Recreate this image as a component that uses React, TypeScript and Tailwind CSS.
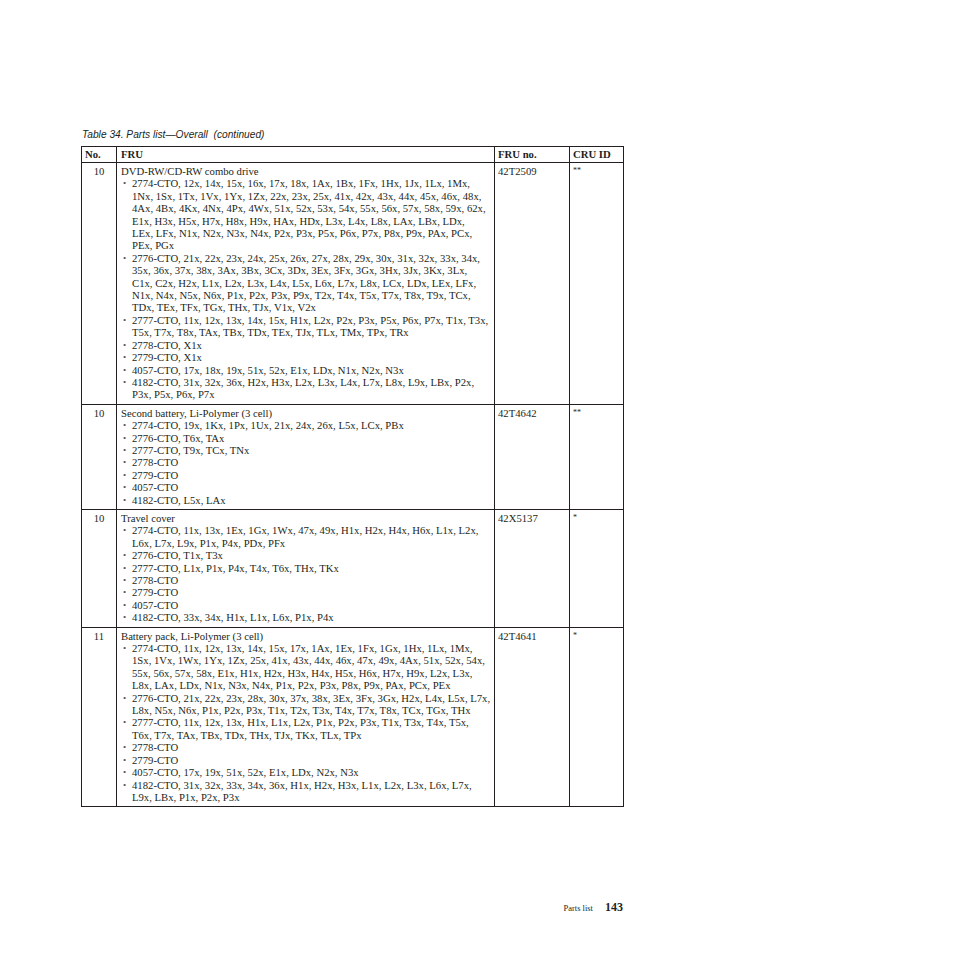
type Row = { no: string; title: string; fru: string; cru: string; items: string[][] }

const rows: Row[] = [
  {
    no: "10",
    title: "DVD-RW/CD-RW combo drive",
    fru: "42T2509",
    cru: "**",
    items: [
      [
        "2774-CTO, 12x, 14x, 15x, 16x, 17x, 18x, 1Ax, 1Bx, 1Fx, 1Hx, 1Jx, 1Lx, 1Mx,",
        "1Nx, 1Sx, 1Tx, 1Vx, 1Yx, 1Zx, 22x, 23x, 25x, 41x, 42x, 43x, 44x, 45x, 46x, 48x,",
        "4Ax, 4Bx, 4Kx, 4Nx, 4Px, 4Wx, 51x, 52x, 53x, 54x, 55x, 56x, 57x, 58x, 59x, 62x,",
        "E1x, H3x, H5x, H7x, H8x, H9x, HAx, HDx, L3x, L4x, L8x, LAx, LBx, LDx,",
        "LEx, LFx, N1x, N2x, N3x, N4x, P2x, P3x, P5x, P6x, P7x, P8x, P9x, PAx, PCx,",
        "PEx, PGx",
      ],
      [
        "2776-CTO, 21x, 22x, 23x, 24x, 25x, 26x, 27x, 28x, 29x, 30x, 31x, 32x, 33x, 34x,",
        "35x, 36x, 37x, 38x, 3Ax, 3Bx, 3Cx, 3Dx, 3Ex, 3Fx, 3Gx, 3Hx, 3Jx, 3Kx, 3Lx,",
        "C1x, C2x, H2x, L1x, L2x, L3x, L4x, L5x, L6x, L7x, L8x, LCx, LDx, LEx, LFx,",
        "N1x, N4x, N5x, N6x, P1x, P2x, P3x, P9x, T2x, T4x, T5x, T7x, T8x, T9x, TCx,",
        "TDx, TEx, TFx, TGx, THx, TJx, V1x, V2x",
      ],
      [
        "2777-CTO, 11x, 12x, 13x, 14x, 15x, H1x, L2x, P2x, P3x, P5x, P6x, P7x, T1x, T3x,",
        "T5x, T7x, T8x, TAx, TBx, TDx, TEx, TJx, TLx, TMx, TPx, TRx",
      ],
      ["2778-CTO, X1x"],
      ["2779-CTO, X1x"],
      ["4057-CTO, 17x, 18x, 19x, 51x, 52x, E1x, LDx, N1x, N2x, N3x"],
      ["4182-CTO, 31x, 32x, 36x, H2x, H3x, L2x, L3x, L4x, L7x, L8x, L9x, LBx, P2x,", "P3x, P5x, P6x, P7x"],
    ],
  },
  {
    no: "10",
    title: "Second battery, Li-Polymer (3 cell)",
    fru: "42T4642",
    cru: "**",
    items: [
      ["2774-CTO, 19x, 1Kx, 1Px, 1Ux, 21x, 24x, 26x, L5x, LCx, PBx"],
      ["2776-CTO, T6x, TAx"],
      ["2777-CTO, T9x, TCx, TNx"],
      ["2778-CTO"],
      ["2779-CTO"],
      ["4057-CTO"],
      ["4182-CTO, L5x, LAx"],
    ],
  },
  {
    no: "10",
    title: "Travel cover",
    fru: "42X5137",
    cru: "*",
    items: [
      ["2774-CTO, 11x, 13x, 1Ex, 1Gx, 1Wx, 47x, 49x, H1x, H2x, H4x, H6x, L1x, L2x,", "L6x, L7x, L9x, P1x, P4x, PDx, PFx"],
      ["2776-CTO, T1x, T3x"],
      ["2777-CTO, L1x, P1x, P4x, T4x, T6x, THx, TKx"],
      ["2778-CTO"],
      ["2779-CTO"],
      ["4057-CTO"],
      ["4182-CTO, 33x, 34x, H1x, L1x, L6x, P1x, P4x"],
    ],
  },
  {
    no: "11",
    title: "Battery pack, Li-Polymer (3 cell)",
    fru: "42T4641",
    cru: "*",
    items: [
      [
        "2774-CTO, 11x, 12x, 13x, 14x, 15x, 17x, 1Ax, 1Ex, 1Fx, 1Gx, 1Hx, 1Lx, 1Mx,",
        "1Sx, 1Vx, 1Wx, 1Yx, 1Zx, 25x, 41x, 43x, 44x, 46x, 47x, 49x, 4Ax, 51x, 52x, 54x,",
        "55x, 56x, 57x, 58x, E1x, H1x, H2x, H3x, H4x, H5x, H6x, H7x, H9x, L2x, L3x,",
        "L8x, LAx, LDx, N1x, N3x, N4x, P1x, P2x, P3x, P8x, P9x, PAx, PCx, PEx",
      ],
      [
        "2776-CTO, 21x, 22x, 23x, 28x, 30x, 37x, 38x, 3Ex, 3Fx, 3Gx, H2x, L4x, L5x, L7x,",
        "L8x, N5x, N6x, P1x, P2x, P3x, T1x, T2x, T3x, T4x, T7x, T8x, TCx, TGx, THx",
      ],
      [
        "2777-CTO, 11x, 12x, 13x, H1x, L1x, L2x, P1x, P2x, P3x, T1x, T3x, T4x, T5x,",
        "T6x, T7x, TAx, TBx, TDx, THx, TJx, TKx, TLx, TPx",
      ],
      ["2778-CTO"],
      ["2779-CTO"],
      ["4057-CTO, 17x, 19x, 51x, 52x, E1x, LDx, N2x, N3x"],
      ["4182-CTO, 31x, 32x, 33x, 34x, 36x, H1x, H2x, H3x, L1x, L2x, L3x, L6x, L7x,", "L9x, LBx, P1x, P2x, P3x"],
    ],
  },
]

const serif = "font-['Liberation_Serif',serif]"

export default function App() {
  return (
    <div className={`w-[954px] h-[954px] bg-white text-[#231f20] ${serif}`}>
      <div className="ml-[81px] w-[542px] pt-[128px]">
        <p className="font-['Liberation_Sans',sans-serif] italic text-[10.2px] leading-[13px] whitespace-pre pl-[1px] mb-[5px]">
          Table 34. Parts list—Overall  (continued)
        </p>
        <table className="w-[542px] table-fixed border-collapse text-[10.7px] leading-[12.4px]">
          <colgroup>
            <col className="w-[35px]" />
            <col className="w-[378px]" />
            <col className="w-[75px]" />
            <col className="w-[54px]" />
          </colgroup>
          <thead>
            <tr className="h-[16px] font-bold text-left">
              <th className="border border-[#231f20] pl-[3px] py-0 align-middle">No.</th>
              <th className="border border-[#231f20] pl-[4px] py-0 align-middle">FRU</th>
              <th className="border border-[#231f20] pl-[3px] py-0 align-middle">FRU no.</th>
              <th className="border border-[#231f20] pl-[3px] py-0 align-middle">CRU ID</th>
            </tr>
          </thead>
          <tbody>
            {rows.map((r, i) => (
              <tr key={i}>
                <td className="border border-[#231f20] align-top text-center pt-[2px] pb-[3px]">{r.no}</td>
                <td className="border border-[#231f20] align-top pl-[4px] pt-[2px] pb-[3px]">
                  <div className="whitespace-nowrap">{r.title}</div>
                  {r.items.map((lines, j) => (
                    <div key={j} className="flex">
                      <span className="w-[11px] shrink-0 pl-[2px] text-[9px] text-[#555]">•</span>
                      <div>
                        {lines.map((l, k) => (
                          <div key={k} className="whitespace-nowrap">
                            {l}
                          </div>
                        ))}
                      </div>
                    </div>
                  ))}
                </td>
                <td className="border border-[#231f20] align-top pl-[3px] pt-[2px] pb-[3px]">{r.fru}</td>
                <td className="border border-[#231f20] align-top pl-[3px] pt-[2px] pb-[3px] text-[8px]">{r.cru}</td>
              </tr>
            ))}
          </tbody>
        </table>
        <div className="mt-[91px] flex items-baseline justify-end gap-[12px]">
          <span className="text-[8.5px]">Parts list</span>
          <span className="text-[12px] font-bold">143</span>
        </div>
      </div>
    </div>
  )
}
